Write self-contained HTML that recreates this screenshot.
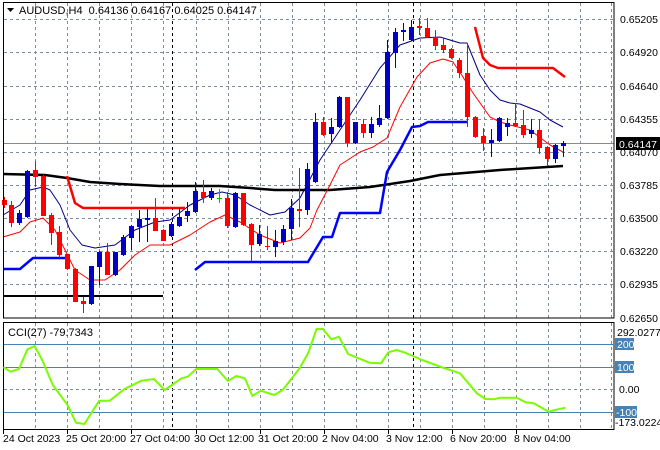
<!DOCTYPE html>
<html><head><meta charset="utf-8"><style>
html,body{margin:0;padding:0;background:#fff;width:660px;height:450px;overflow:hidden}
svg{display:block;font-family:"Liberation Sans",sans-serif}
</style></head><body>
<svg id="s" width="660" height="450" viewBox="0 0 660 450" xmlns="http://www.w3.org/2000/svg">
<g id="grid" stroke="#7f8c99" stroke-width="1" stroke-dasharray="3,3" fill="none"></g>
<line x1="172.5" y1="3" x2="172.5" y2="318" stroke="#000" stroke-dasharray="3,3"/>
<line x1="413.5" y1="3" x2="413.5" y2="318" stroke="#000" stroke-dasharray="3,3"/>
<line x1="172.5" y1="322" x2="172.5" y2="429" stroke="#000" stroke-dasharray="3,3"/>
<line x1="413.5" y1="322" x2="413.5" y2="429" stroke="#000" stroke-dasharray="3,3"/>
<line x1="3" y1="143.5" x2="614" y2="143.5" stroke="#7f8c99"/>
<g fill="none" stroke-linejoin="round">
<polyline stroke="#000" stroke-width="2.5" points="3,174 45,175 67,178 90,182 120,184 160,186 220,186 250,188 275,190 330,190 370,187 410,181 440,175 500,170 563,166"/>
<polyline stroke="#000" stroke-width="2" points="3,296 163,296"/>
<polyline stroke="#000080" stroke-width="1" points="3,215 20,205 30,190 43,187 50,190 60,205 70,230 82,245 95,248 115,245 135,230 155,222 170,220 190,205 210,195 222,192 235,195 250,205 270,215 285,212 300,198 320,160 340,130 360,100 380,68 400,45 420,38 440,37 460,43 467,43 480,75 490,90 500,100 510,103 520,104 540,112 550,120 563,127"/>
<polyline stroke="#f00" stroke-width="1" points="3,237 20,232 30,222 43,218 55,230 65,250 75,270 90,280 105,280 120,270 135,255 150,245 170,245 190,235 210,222 225,215 240,222 260,235 280,243 300,238 310,228 317,210 330,185 340,165 360,152 373,147 387,138 400,107 417,77 430,63 443,59 453,62 463,77 473,93 490,117 500,122 510,125 530,130 550,145 563,152"/>
<polyline stroke="#f00" stroke-width="2.5" points="67,176 75,203 83,208 185,208"/>
<polyline stroke="#f00" stroke-width="2.5" points="475,27 483,58 490,65 498,68 553,68 565,77"/>
<polyline stroke="#0000ff" stroke-width="2.5" points="3,269 20,269 33,258 67,258"/>
<polyline stroke="#0000ff" stroke-width="2.5" points="195,270 205,262 308,262 317,247 323,237 332,237 340,213 380,213 387,172 400,150 412,127 420,126 428,122 467,122"/>
</g>
<g id="candles"></g>
<rect x="3.5" y="2.5" width="610.5" height="315.5" fill="none" stroke="#000"/>
<rect x="3.5" y="322.5" width="610.5" height="107" fill="none" stroke="#000"/>
<g stroke="#4682b4" stroke-width="1">
<line x1="4" y1="344.5" x2="614" y2="344.5"/><line x1="4" y1="367.5" x2="614" y2="367.5"/><line x1="4" y1="412.5" x2="614" y2="412.5"/>
</g>
<line x1="4" y1="389.5" x2="614" y2="389.5" stroke="#7f8c99" stroke-dasharray="3,3"/>
<polyline id="cci" fill="none" stroke="#7cfc00" stroke-width="2" stroke-linejoin="round"/>
<g font-size="11" fill="#000">
<text x="19" y="14" xml:space="preserve" style="white-space:pre">AUDUSD,H4  0.64136 0.64167 0.64025 0.64147</text>
<text x="8" y="336">CCI(27) -79.7343</text>
</g>
<path d="M7,8 L14,8 L10.5,12 Z" fill="#000"/>
<g font-size="10.5" fill="#000" id="axis">
<text x="620" y="23">0.65205</text><text x="620" y="56">0.64920</text><text x="620" y="90">0.64640</text>
<text x="620" y="123">0.64355</text><text x="620" y="156">0.64070</text><text x="620" y="189">0.63785</text>
<text x="620" y="222">0.63500</text><text x="620" y="255">0.63220</text><text x="620" y="288">0.62935</text>
<text x="620" y="322">0.62650</text>
<text x="617" y="336">292.0277</text>
<text x="619" y="393">0.00</text>
<text x="615" y="426">-173.0224</text>
</g>
<rect x="616" y="137" width="44" height="13" fill="#000"/>
<text x="619" y="148" font-size="10.5" fill="#fff">0.64147</text>
<g font-size="10.5">
<rect x="615" y="338" width="19" height="12" fill="#4682b4"/><text x="617" y="348" fill="#fff">200</text>
<rect x="615" y="361" width="19" height="12" fill="#4682b4"/><text x="617" y="371" fill="#fff">100</text>
<rect x="615" y="406" width="22" height="12" fill="#4682b4"/><text x="616" y="416" fill="#fff">-100</text>
</g>
<g font-size="10.5" fill="#000">
<text x="3" y="442">24 Oct 2023</text><text x="66" y="442">25 Oct 20:00</text><text x="130" y="442">27 Oct 04:00</text>
<text x="194" y="442">30 Oct 12:00</text><text x="258" y="442">31 Oct 20:00</text><text x="322" y="442">2 Nov 04:00</text>
<text x="386" y="442">3 Nov 12:00</text><text x="450" y="442">6 Nov 20:00</text><text x="514" y="442">8 Nov 04:00</text>
</g>
<g id="ticks" stroke="#000"></g>
</svg>
<script>
var NS="http://www.w3.org/2000/svg";
function el(p,t,a){var e=document.createElementNS(NS,t);for(var k in a)e.setAttribute(k,a[k]);document.getElementById(p).appendChild(e);}
var vx=[35,67,99,131,163,196,228,260,292,324,356,388,420,452,484,516,548,580,611];
vx.forEach(function(x){el("grid","line",{x1:x+.5,y1:3,x2:x+.5,y2:318});el("grid","line",{x1:x+.5,y1:323,x2:x+.5,y2:429});});
[19,52,86,119,152,185,218,251,284].forEach(function(y){el("grid","line",{x1:4,y1:y+.5,x2:614,y2:y+.5});});
[3,67,131,196,260,324,388,452,516].forEach(function(x){el("ticks","line",{x1:x+.5,y1:430,x2:x+.5,y2:434});});
var R="#f00",B="#0000c0";
var c=[
[4,200,205,197,208,R],[11,205,223,201,227,R],[19,213,223,210,225,B],[27,171,217,170,218,B],[35,170,177,161,187,R],
[43,176,216,175,216,R],[51,215,233,213,245,R],[59,232,255,226,258,R],[67,254,269,254,270,R],[75,269,302,268,302,R],
[83,301,304,297,313,R],[91,266,304,266,305,B],[99,252,267,251,285,B],[107,252,275,243,275,R],[115,252,275,252,276,B],
[123,237,255,235,256,B],[131,226,238,225,250,B],[139,219,227,210,242,B],[147,218,220,209,242,B],[155,218,231,198,231,R],
[163,230,241,229,241,R],[171,224,236,222,237,B],[179,217,226,208,227,B],[187,211,216,202,222,B],[195,191,212,182,213,B],
[203,192,198,180,203,R],[211,191,198,188,200,B],[219,198,199,189,203,"#00c000"],[227,198,226,192,228,R],[235,193,227,192,228,B],
[243,193,225,193,226,R],[251,224,245,223,261,R],[259,234,244,225,246,B],[267,246,247,226,250,R],[275,241,247,230,257,B],
[283,229,242,225,245,B],[291,208,229,199,240,B],[299,209,211,168,227,R],[307,169,210,163,215,B],[315,122,182,113,183,B],
[323,122,135,117,136,R],[331,127,134,118,143,B],[339,97,127,96,128,B],[347,97,143,97,147,R],[355,122,143,122,144,B],
[363,124,133,119,138,R],[371,124,133,117,138,B],[379,118,125,105,127,B],[387,52,118,40,119,B],[395,32,53,28,68,B],
[403,30,32,23,41,B],[411,27,40,20,41,B],[419,26,28,18,35,R],[427,28,37,18,38,R],[435,37,46,30,50,R],
[443,45,50,38,53,R],[451,49,58,48,59,R],[459,60,73,58,78,R],[467,73,117,43,127,R],[475,117,137,116,138,R],
[483,136,143,128,151,R],[491,140,143,129,157,B],[499,118,141,117,142,B],[507,123,127,118,136,B],[515,123,126,103,127,R],
[523,125,135,110,138,R],[531,130,134,119,138,B],[539,130,148,119,154,R],[547,147,159,146,166,R],[555,145,159,144,163,B],
[563,143,146,141,157,B]];
c.forEach(function(d){var x=d[0];el("candles","line",{x1:x+.5,y1:d[3],x2:x+.5,y2:d[4],stroke:d[5]});
var h=Math.max(d[2]-d[1],1);el("candles","rect",{x:x-2,y:d[1],width:5,height:h,fill:d[5]});});
var cp=[[8,172],[25,185],[45,177],[65,118],[82,108],[100,150],[125,225],[160,285],[180,338],[200,342],[235,272],[260,272],[295,237],[335,212],[365,207],[390,240],[430,205],[445,200],[465,177],[515,177],[540,213],[560,198],[580,205],[598,258],[618,242],[650,255],[670,240],[710,175],[730,130],[750,57],[765,57],[785,88],[803,80],[825,132],[875,158],[903,160],[920,127],[940,120],[960,128],[1000,150],[1050,173],[1090,190],[1130,250],[1150,267],[1170,268],[1185,263],[1225,263],[1245,277],[1265,280],[1300,305],[1315,300],[1340,293]];
document.getElementById("cci").setAttribute("points",cp.map(function(p){return (p[0]*0.422).toFixed(1)+","+(310+p[1]/3).toFixed(1);}).join(" "));
</script>
</body></html>
